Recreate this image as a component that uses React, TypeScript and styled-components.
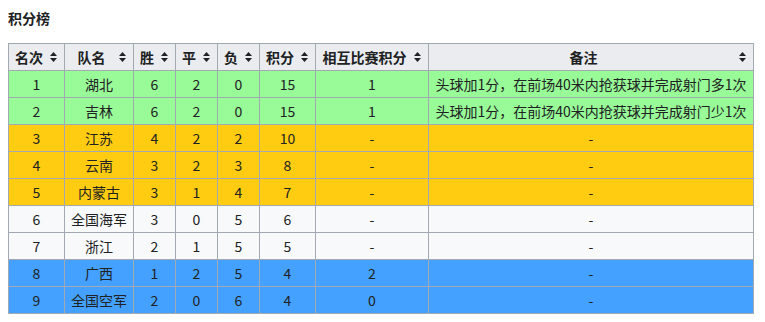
import React from 'react';
import styled, { createGlobalStyle } from 'styled-components';

type Tone = 'promo' | 'mid' | 'plain' | 'down';

interface Team {
  rank: number;
  name: string;
  win: number;
  draw: number;
  loss: number;
  points: number;
  h2h: string;
  note: string;
  tone: Tone;
}

const NOTE_UP = '头球加1分，在前场40米内抢获球并完成射门多1次';
const NOTE_DOWN = '头球加1分，在前场40米内抢获球并完成射门少1次';

const teams: Team[] = [
  { rank: 1, name: '湖北', win: 6, draw: 2, loss: 0, points: 15, h2h: '1', note: NOTE_UP, tone: 'promo' },
  { rank: 2, name: '吉林', win: 6, draw: 2, loss: 0, points: 15, h2h: '1', note: NOTE_DOWN, tone: 'promo' },
  { rank: 3, name: '江苏', win: 4, draw: 2, loss: 2, points: 10, h2h: '-', note: '-', tone: 'mid' },
  { rank: 4, name: '云南', win: 3, draw: 2, loss: 3, points: 8, h2h: '-', note: '-', tone: 'mid' },
  { rank: 5, name: '内蒙古', win: 3, draw: 1, loss: 4, points: 7, h2h: '-', note: '-', tone: 'mid' },
  { rank: 6, name: '全国海军', win: 3, draw: 0, loss: 5, points: 6, h2h: '-', note: '-', tone: 'plain' },
  { rank: 7, name: '浙江', win: 2, draw: 1, loss: 5, points: 5, h2h: '-', note: '-', tone: 'plain' },
  { rank: 8, name: '广西', win: 1, draw: 2, loss: 5, points: 4, h2h: '2', note: '-', tone: 'down' },
  { rank: 9, name: '全国空军', win: 2, draw: 0, loss: 6, points: 4, h2h: '0', note: '-', tone: 'down' },
];

const columns = [
  { label: '名次', width: 56 },
  { label: '队名', width: 69 },
  { label: '胜', width: 42 },
  { label: '平', width: 42 },
  { label: '负', width: 42 },
  { label: '积分', width: 56 },
  { label: '相互比赛积分', width: 113 },
  { label: '备注', width: 325 },
];

const toneColors: Record<Tone, string> = {
  promo: '#98fb98',
  mid: '#ffcc11',
  plain: '#f8f9fa',
  down: '#44a1ff',
};

const SortIcon: React.FC = () => (
  <SortSvg width="7" height="10" viewBox="0 0 7 10">
    <polygon points="0,4 3.5,0 7,4" fill="#202122" />
    <polygon points="0,6 7,6 3.5,10" fill="#202122" />
  </SortSvg>
);

const App: React.FC = () => {
  return (
    <>
      <GlobalStyle />
      <Page>
        <Title>积分榜</Title>
        <Table>
          <colgroup>
            {columns.map((c) => (
              <col key={c.label} style={{ width: c.width }} />
            ))}
          </colgroup>
          <thead>
            <tr>
              {columns.map((c) => (
                <HeadCell key={c.label}>
                  {c.label}
                  <SortIcon />
                </HeadCell>
              ))}
            </tr>
          </thead>
          <tbody>
            {teams.map((t) => (
              <Row key={t.rank} $tone={t.tone}>
                <Cell>{t.rank}</Cell>
                <Cell>{t.name}</Cell>
                <Cell>{t.win}</Cell>
                <Cell>{t.draw}</Cell>
                <Cell>{t.loss}</Cell>
                <Cell>{t.points}</Cell>
                <Cell>{t.h2h}</Cell>
                <Cell $nowrap>{t.note}</Cell>
              </Row>
            ))}
          </tbody>
        </Table>
      </Page>
    </>
  );
};

export default App;

const GlobalStyle = createGlobalStyle`
  body {
    margin: 0;
    background: #ffffff;
    color: #202122;
    font-family: "Noto Sans CJK SC", "Noto Sans", sans-serif;
  }
`;

const Page = styled.div`
  padding: 8px;
`;

const Title = styled.div`
  font-size: 14px;
  font-weight: bold;
  line-height: 20px;
  margin: 0 0 15px;
`;

const Table = styled.table`
  width: 745px;
  table-layout: fixed;
  border-collapse: collapse;
  border: 1px solid #a2a9b1;
  font-size: 14px;
  line-height: 20px;
  color: #202122;
`;

const HeadCell = styled.th`
  position: relative;
  background: #eaecf0;
  border: 1px solid #a2a9b1;
  padding: 3px 21px 3px 6px;
  font-weight: bold;
  text-align: center;
  white-space: nowrap;
`;

const SortSvg = styled.svg`
  position: absolute;
  right: 7px;
  top: 50%;
  margin-top: -5px;
`;

const Row = styled.tr<{ $tone: Tone }>`
  background: ${(p) => toneColors[p.$tone]};
`;

const Cell = styled.td<{ $nowrap?: boolean }>`
  border: 1px solid #a2a9b1;
  padding: 3px 4px;
  text-align: center;
  white-space: ${(p) => (p.$nowrap ? 'nowrap' : 'normal')};
`;
